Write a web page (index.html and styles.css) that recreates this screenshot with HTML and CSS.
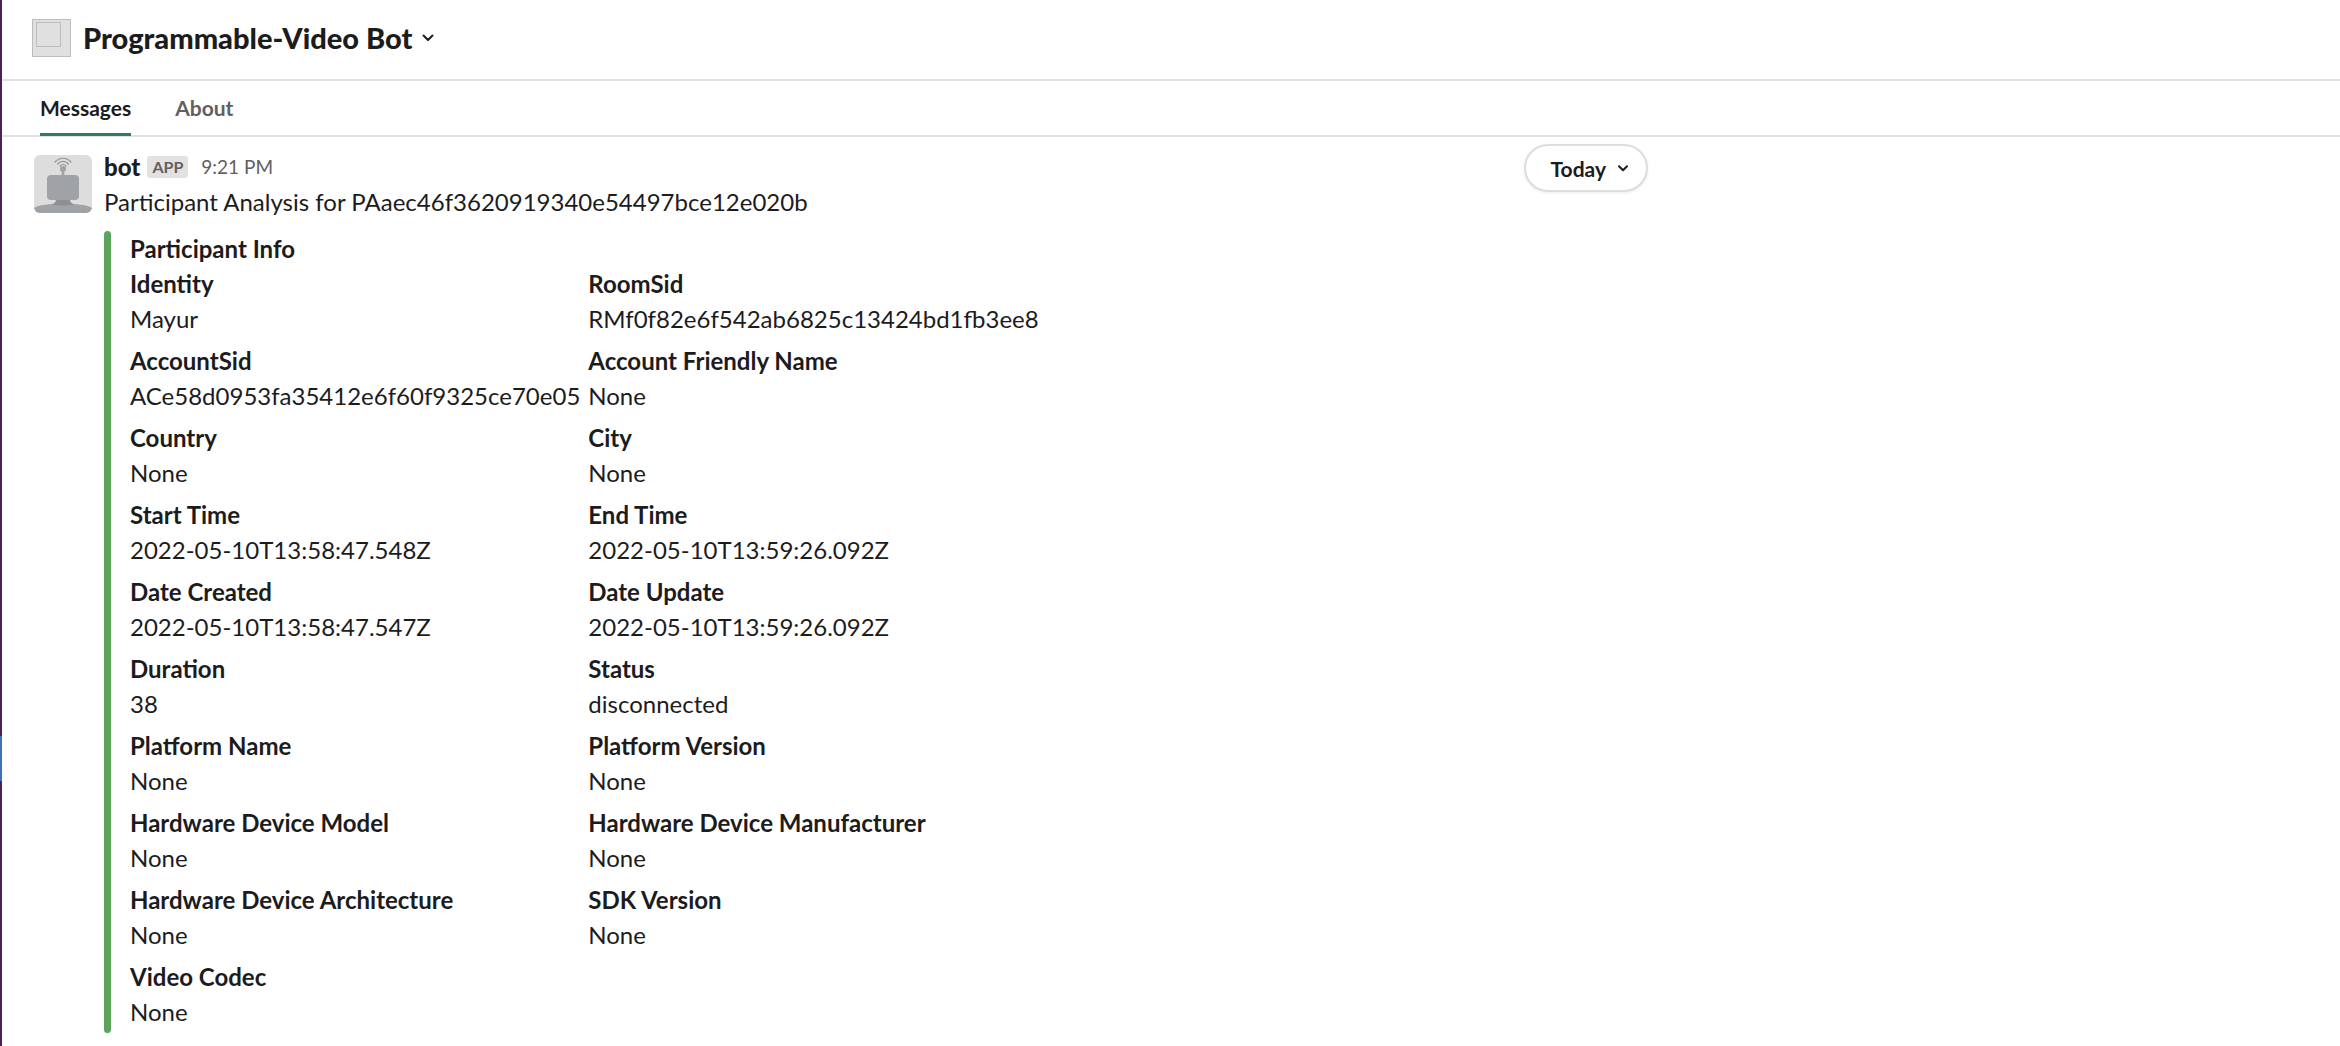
FILE: index.html
```html
<!DOCTYPE html>
<html lang="en">
<head>
<meta charset="utf-8">
<meta name="viewport" content="width=device-width, initial-scale=1">
<title>Programmable-Video Bot</title>
<link rel="stylesheet" href="styles.css">
</head>
<body>
<div class="app">
  <aside class="rail"><span class="rail-active"></span></aside>
  <main class="pane">
    <header class="header">
      <span class="app-icon"><span class="app-icon-inner"></span></span>
      <h1 class="title"><button class="title-button" type="button">Programmable-Video Bot
        <svg class="title-chevron" viewBox="0 0 12 8" aria-hidden="true"><path d="M1.5 1.5 6 6l4.500-4.500"/></svg></button></h1>
    </header>
    <nav class="tabs">
      <a class="tab tab-active" href="#messages">Messages</a>
      <a class="tab" href="#about">About</a>
    </nav>
    <section class="messages" id="messages">
      <button class="day" type="button">Today
        <svg class="day-chevron" viewBox="0 0 10 7" aria-hidden="true"><path d="M1 1.200 5 5.200l4-4"/></svg></button>
      <article class="message">
        <svg class="avatar" viewBox="0 0 58 58" role="img" aria-label="bot">
          <rect width="58" height="58" fill="#dddddd"/>
          <path d="M0 58v-5c4-3 16-4.500 29-4.500S54 50 58 53v5z" fill="#9fa3a5"/>
          <path d="M22 44h14c0 3 1 4 4 5.500-6 1.500-16 1.500-22 0 3-1.500 4-2.500 4-5.500z" fill="#8d9193"/>
          <rect x="13" y="20" width="32" height="25" rx="4" fill="#9fa3a5"/>
          <path d="M27.500 21 28 13h2l.5 8z" fill="#9fa3a5"/>
          <circle cx="29" cy="14" r="3" fill="#9fa3a5"/>
          <path d="M21 7c4.500-5 11.500-5 16 0M23.500 9c3.200-3.500 7.800-3.500 11 0M26 11c1.800-2 4.200-2 6 0" fill="none" stroke="#909496" stroke-width="1.200"/>
        </svg>
        <div class="content">
          <div class="meta">
            <button class="sender" type="button">bot</button>
            <span class="badge">APP</span>
            <a class="time" href="#message">9:21 PM</a>
          </div>
          <p class="text">Participant Analysis for PAaec46f3620919340e54497bce12e020b</p>
          <div class="attachment">
            <div class="attachment-body">
              <h2 class="attachment-title">Participant Info</h2>
              <dl class="fields">
                <div><dt>Identity</dt><dd>Mayur</dd></div>
                <div><dt>RoomSid</dt><dd>RMf0f82e6f542ab6825c13424bd1fb3ee8</dd></div>
                <div><dt>AccountSid</dt><dd>ACe58d0953fa35412e6f60f9325ce70e05</dd></div>
                <div><dt>Account Friendly Name</dt><dd>None</dd></div>
                <div><dt>Country</dt><dd>None</dd></div>
                <div><dt>City</dt><dd>None</dd></div>
                <div><dt>Start Time</dt><dd>2022-05-10T13:58:47.548Z</dd></div>
                <div><dt>End Time</dt><dd>2022-05-10T13:59:26.092Z</dd></div>
                <div><dt>Date Created</dt><dd>2022-05-10T13:58:47.547Z</dd></div>
                <div><dt>Date Update</dt><dd>2022-05-10T13:59:26.092Z</dd></div>
                <div><dt>Duration</dt><dd>38</dd></div>
                <div><dt>Status</dt><dd>disconnected</dd></div>
                <div><dt>Platform Name</dt><dd>None</dd></div>
                <div><dt>Platform Version</dt><dd>None</dd></div>
                <div><dt>Hardware Device Model</dt><dd>None</dd></div>
                <div><dt>Hardware Device Manufacturer</dt><dd>None</dd></div>
                <div><dt>Hardware Device Architecture</dt><dd>None</dd></div>
                <div><dt>SDK Version</dt><dd>None</dd></div>
                <div><dt>Video Codec</dt><dd>None</dd></div>
              </dl>
            </div>
          </div>
        </div>
      </article>
    </section>
  </main>
</div>
</body>
</html>
```

FILE: styles.css
```css
* { box-sizing: border-box; }

body {
  margin: 0;
  background: #fff;
  color: #1d1c1d;
  font-family: Lato, sans-serif;
  font-size: 24px;
  line-height: 35px;
}

h1, h2, p, dl, dd { margin: 0; }

button {
  padding: 0;
  border: 0;
  background: none;
  color: inherit;
  font: inherit;
  cursor: pointer;
}

a { color: inherit; text-decoration: none; }

svg path { stroke-linecap: round; stroke-linejoin: round; }

.app { display: flex; min-height: 100vh; }

/* Edge of the workspace sidebar */
.rail {
  position: relative;
  flex: none;
  width: 2px;
  background: #4a2352;
}

.rail-active {
  position: absolute;
  top: 736px;
  left: 0;
  width: 2px;
  height: 45px;
  background: #3b74b4;
}

.pane { flex: 1; min-width: 0; }

.header {
  display: flex;
  align-items: center;
  gap: 12px;
  height: 81px;
  padding: 0 30px 4px;
  border-bottom: 2px solid #e2e2e2;
}

.app-icon {
  flex: none;
  width: 39px;
  height: 38px;
  padding: 2px 3px;
  border: 1px solid #bdbdbd;
  background: #e0e0e0;
}

.app-icon-inner {
  display: block;
  width: 25px;
  height: 25px;
  border: 1px solid #bdbdbd;
}

.title { font-size: 29px; font-weight: 900; }

.title-button { display: flex; align-items: center; gap: 10px; }

.title-chevron {
  width: 12px;
  height: 8px;
  fill: none;
  stroke: #1d1c1d;
  stroke-width: 2;
}

.tabs {
  display: flex;
  gap: 44px;
  height: 56px;
  padding: 0 38px;
  border-bottom: 2px solid #e2e2e2;
  color: #616061;
  font-size: 21px;
  font-weight: 700;
}

.tab { height: 55px; padding-top: 9px; }

.tab-active { border-bottom: 3px solid #2f7d5d; color: #1d1c1d; }

.messages { position: relative; padding: 12px 32px; }

.day {
  position: absolute;
  top: 7px;
  right: 692px;
  display: flex;
  align-items: center;
  gap: 12px;
  height: 48px;
  padding: 0 18px 0 25px;
  border: 2px solid #dddddd;
  border-radius: 24px;
  background: #fff;
  box-shadow: 0 1px 3px rgba(0, 0, 0, 0.08);
  font-size: 21px;
  font-weight: 700;
}

.day-chevron {
  width: 10px;
  height: 7px;
  fill: none;
  stroke: #1d1c1d;
  stroke-width: 2;
}

.message { display: flex; align-items: flex-start; gap: 12px; }

.avatar {
  flex: none;
  width: 58px;
  height: 58px;
  margin-top: 6px;
  border-radius: 6px;
}

.meta { display: flex; align-items: center; height: 35px; }

.sender { font-weight: 900; }

.badge {
  height: 22px;
  margin: 0 13px 0 7px;
  padding: 0 5px;
  border-radius: 3px;
  background: #e2e2e2;
  color: #616061;
  font-size: 16px;
  font-weight: 700;
  line-height: 22px;
}

.time { color: #616061; font-size: 19px; }

.attachment { display: flex; gap: 19px; margin-top: 12px; }

.attachment::before {
  content: "";
  width: 7px;
  border-radius: 4px;
  background: #5aa55a;
}

.attachment-body { padding-bottom: 4px; }

.attachment-title { font-size: 24px; font-weight: 700; }

.fields {
  display: grid;
  grid-template-columns: repeat(2, max-content);
  gap: 7px 8px;
}

dt { font-weight: 700; }
```
